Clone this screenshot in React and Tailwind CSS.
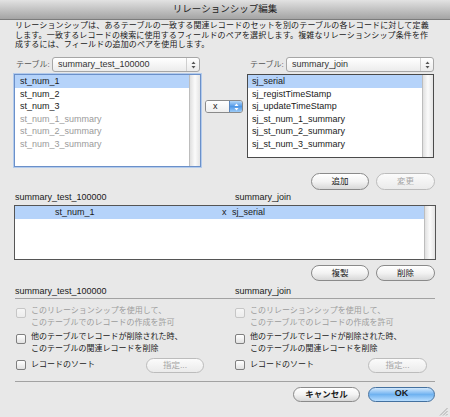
import React from 'react';

function Arrows({ color = '#555' }) {
  return (
    <svg width="5" height="8" viewBox="0 0 5 8">
      <path d="M2.5 0.5 L4.5 3 L0.5 3 Z" fill={color} />
      <path d="M2.5 7.5 L4.5 5 L0.5 5 Z" fill={color} />
    </svg>
  );
}

function Popup({ text, className }) {
  return (
    <div className={`h-[15px] rounded-[3px] border border-[#a6a6a6] bg-gradient-to-b from-white to-[#ececec] flex items-center ${className}`}>
      <span className="flex-1 pl-[5px] text-[9px] text-[#333] whitespace-nowrap overflow-hidden">{text}</span>
      <span className="w-[13px] h-full border-l border-[#cfcfcf] flex items-center justify-center">
        <Arrows />
      </span>
    </div>
  );
}

function Pill({ children, disabled, className }) {
  return (
    <div
      className={`rounded-full border flex items-center justify-center text-[8.5px] bg-gradient-to-b ${
        disabled
          ? 'border-[#bcbcbc] from-[#fbfbfb] to-[#ebebeb] text-[#a6a6a6]'
          : 'border-[#8a8a8a] from-white via-[#f3f3f3] to-[#d8d8d8] text-[#1a1a1a]'
      } ${className}`}
    >
      {children}
    </div>
  );
}

function Check({ disabled }) {
  return (
    <span
      className={`block w-[10px] h-[10px] shrink-0 rounded-[2px] border bg-gradient-to-b ${
        disabled ? 'border-[#c6c6c6] from-[#f6f6f6] to-[#ececec]' : 'border-[#7f7f7f] from-white to-[#e2e2e2]'
      }`}
    />
  );
}

function Scrollbar() {
  return <div className="w-[11px] h-full border-l border-[#bdbdbd] bg-gradient-to-r from-[#e0e0e0] via-[#fbfbfb] to-[#e4e4e4]" />;
}

function CheckColumn({ className, btnClass }) {
  return (
    <div className={`pl-[2px] text-[8px] ${className}`}>
      <div className="flex items-start gap-[5px] text-[#9c9c9c]">
        <span className="block mt-[3px]"><Check disabled /></span>
        <div className="leading-[12px] whitespace-nowrap">
          <div>このリレーションシップを使用して、</div>
          <div>このテーブルでのレコードの作成を許可</div>
        </div>
      </div>
      <div className="mt-[2px] flex items-start gap-[5px]">
        <span className="block mt-[3px]"><Check /></span>
        <div className="leading-[12px] whitespace-nowrap">
          <div>他のテーブルでレコードが削除された時、</div>
          <div>このテーブルの関連レコードを削除</div>
        </div>
      </div>
      <div className="mt-[3px] h-[15px] flex items-center gap-[5px]">
        <Check />
        <span className="leading-[12px]">レコードのソート</span>
        <Pill disabled className={`ml-auto h-[15px] ${btnClass}`}>指定...</Pill>
      </div>
    </div>
  );
}

const leftItems = [
  { t: 'st_num_1', sel: true },
  { t: 'st_num_2' },
  { t: 'st_num_3' },
  { t: 'st_num_1_summary', dim: true },
  { t: 'st_num_2_summary', dim: true },
  { t: 'st_num_3_summary', dim: true },
];
const rightItems = ['sj_serial', 'sj_registTimeStamp', 'sj_updateTimeStamp', 'sj_st_num_1_summary', 'sj_st_num_2_summary', 'sj_st_num_3_summary'];

export default function App() {
  return (
    <div className="w-[450px] h-[417px] bg-[#e8e8e8] relative overflow-hidden text-[#1a1a1a] font-[family-name:'Liberation_Sans','Noto_Sans_CJK_JP',sans-serif]">
      <div className="h-[20px] border-b border-[#7c7c7c] bg-gradient-to-b from-[#e2e2e2] to-[#a4a4a4] flex items-center justify-center text-[9.5px] text-[#222]">
        リレーションシップ編集
      </div>

      <div className="px-[14px]">
        <div className="mt-[1px] pl-[1px] text-[8px] leading-[9.5px] tracking-[0.14px] whitespace-nowrap">
          <div>リレーションシップは、あるテーブルの一致する関連レコードのセットを別のテーブルの各レコードに対して定義</div>
          <div>します。一致するレコードの検索に使用するフィールドのペアを選択します。複雑なリレーションシップ条件を作</div>
          <div>成するには、フィールドの追加のペアを使用します。</div>
        </div>

        <div className="mt-[7.5px] h-[15px] flex">
          <div className="w-[186px] pl-[2px] flex items-center">
            <span className="w-[36px] text-[8px] text-[#555]">テーブル:</span>
            <Popup text="summary_test_100000" className="w-[148px]" />
          </div>
          <div className="ml-[48px] pl-[2px] flex items-center">
            <span className="w-[36px] text-[8px] text-[#555]">テーブル:</span>
            <Popup text="summary_join" className="w-[148px]" />
          </div>
        </div>

        <div className="mt-[2px] flex items-start">
          <div className="w-[187px] h-[93px] border border-[#6b90c9] shadow-[0_0_0_1px_#b3cbec] bg-white flex">
            <div className="flex-1 text-[9px]">
              {leftItems.map((it) => (
                <div
                  key={it.t}
                  className={`h-[12.5px] leading-[12.5px] pl-[5px] whitespace-nowrap ${it.sel ? 'bg-[#b5d3fa]' : ''} ${it.dim ? 'text-[#9a9a9a]' : ''}`}
                >
                  {it.t}
                </div>
              ))}
            </div>
            <Scrollbar />
          </div>

          <div className="ml-[4px] mt-[26px] w-[38px] h-[13px] rounded-[3px] border border-[#8a8a8a] flex overflow-hidden">
            <span className="flex-1 bg-gradient-to-b from-white to-[#eeeeee] pl-[7px] text-[9px] leading-[11px]">x</span>
            <span className="w-[13px] border-l border-[#5a86bd] bg-gradient-to-b from-[#b4d8f8] via-[#4e97e6] to-[#9ccbf6] flex items-center justify-center">
              <Arrows color="#fff" />
            </span>
          </div>

          <div className="ml-[4px] w-[187px] h-[84px] border border-[#4a4a4a] bg-white flex">
            <div className="flex-1 text-[9px]">
              {rightItems.map((t, i) => (
                <div key={t} className={`h-[12.5px] leading-[12.5px] pl-[4px] whitespace-nowrap ${i === 0 ? 'bg-[#b5d3fa]' : ''}`}>
                  {t}
                </div>
              ))}
            </div>
            <Scrollbar />
          </div>
        </div>

        <div className="mt-[6px] flex justify-end gap-[7px] pr-[1px]">
          <Pill className="w-[58px] h-[17px]">追加</Pill>
          <Pill disabled className="w-[59px] h-[17px]">変更</Pill>
        </div>

        <div className="mt-[2px] flex text-[9px] leading-[11px]">
          <span className="w-[221px] pl-[1px]">summary_test_100000</span>
          <span>summary_join</span>
        </div>

        <div className="mt-[2px] h-[55px] border border-[#555] bg-white flex">
          <div className="flex-1 text-[9px]">
            <div className="h-[13px] leading-[13px] bg-[#b5d3fa] flex whitespace-nowrap">
              <span className="w-[207px] pl-[40px]">st_num_1</span>
              <span className="w-[10px]">x</span>
              <span>sj_serial</span>
            </div>
          </div>
          <Scrollbar />
        </div>

        <div className="mt-[5px] flex justify-end gap-[7px] pr-[1px]">
          <Pill className="w-[58px] h-[16px]">複製</Pill>
          <Pill className="w-[59px] h-[16px]">削除</Pill>
        </div>

        <div className="mt-[4.5px] flex text-[9px] leading-[11px]">
          <span className="w-[221px] pl-[1px]">summary_test_100000</span>
          <span>summary_join</span>
        </div>
        <div className="mt-[1.5px] mx-[1px] h-px bg-[#a2a2a2]" />

        <div className="mt-[5.5px] flex">
          <CheckColumn className="w-[219px]" btnClass="w-[58px] mr-[29px]" />
          <CheckColumn className="flex-1" btnClass="w-[59px] mr-[9px]" />
        </div>

        <div className="mt-[8px] mx-[1px] h-px bg-[#a2a2a2]" />

        <div className="mt-[5px] flex justify-end gap-[8px] pr-[1px]">
          <Pill className="w-[67px] h-[15px] font-bold">キャンセル</Pill>
          <div className="w-[67px] h-[15px] rounded-full border border-[#44719f] bg-gradient-to-b from-[#d2e8fc] via-[#6fb2f0] to-[#b8deff] flex items-center justify-center text-[9px] font-bold">
            OK
          </div>
        </div>
      </div>

      <svg className="absolute right-[2px] bottom-[1px]" width="9" height="9" viewBox="0 0 9 9">
        <path d="M8.5 1 L1 8.5 M8.5 4 L4 8.5 M8.5 7 L7 8.5" stroke="#9a9a9a" strokeWidth="0.8" />
      </svg>
    </div>
  );
}
